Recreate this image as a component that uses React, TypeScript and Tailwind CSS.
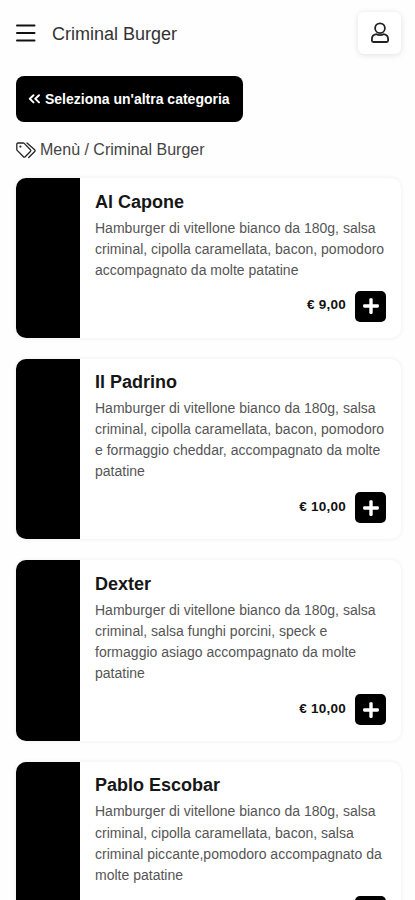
import { FaPlus } from "react-icons/fa"

interface ProductCardProps {
  name: string
  description: string[]
  price: string
}

const products: ProductCardProps[] = [
  {
    name: "Al Capone",
    description: [
      "Hamburger di vitellone bianco da 180g, salsa",
      "criminal, cipolla caramellata, bacon, pomodoro",
      "accompagnato da molte patatine",
    ],
    price: "9,00",
  },
  {
    name: "Il Padrino",
    description: [
      "Hamburger di vitellone bianco da 180g, salsa",
      "criminal, cipolla caramellata, bacon, pomodoro",
      "e formaggio cheddar, accompagnato da molte",
      "patatine",
    ],
    price: "10,00",
  },
  {
    name: "Dexter",
    description: [
      "Hamburger di vitellone bianco da 180g, salsa",
      "criminal, salsa funghi porcini, speck e",
      "formaggio asiago accompagnato da molte",
      "patatine",
    ],
    price: "10,00",
  },
  {
    name: "Pablo Escobar",
    description: [
      "Hamburger di vitellone bianco da 180g, salsa",
      "criminal, cipolla caramellata, bacon, salsa",
      "criminal piccante,pomodoro accompagnato da",
      "molte patatine",
    ],
    price: "10,00",
  },
]

const MenuIcon = () => (
  <svg
    viewBox="0 0 20 18"
    className="h-[18px] w-5 text-[#111]"
    fill="none"
    stroke="currentColor"
    strokeWidth="2"
    strokeLinecap="round"
  >
    <path d="M1 1.5h17.5M1 9h17.5M1 16.5h17.5" />
  </svg>
)

const UserIcon = () => (
  <svg
    viewBox="0 0 20 22"
    className="h-[22px] w-5 text-[#222]"
    fill="none"
    stroke="currentColor"
    strokeWidth="1.8"
    strokeLinejoin="round"
  >
    <circle cx="10" cy="6.2" r="4.9" />
    <path d="M6.4 12.2C3.500 12.600 1.900 14.600 1.900 17.200v1.300c0 .9.7 1.500 1.500 1.500h13.200c.8 0 1.500-.6 1.500-1.500v-1.300c0-2.600-1.600-4.600-4.500-5-1.200.7-2.300.9-3.600.9s-2.400-.2-3.600-.9z" />
  </svg>
)

const BackIcon = () => (
  <svg
    viewBox="0 0 13 10"
    className="mr-1 h-2.5 w-[13px]"
    fill="none"
    stroke="currentColor"
    strokeWidth="1.9"
    strokeLinecap="round"
    strokeLinejoin="round"
  >
    <path d="M5.500 1.200L1.800 4.800l3.700 3.600M11 1.200L7.300 4.800 11 8.400" />
  </svg>
)

const TagsIcon = () => (
  <svg
    viewBox="0 0 20 17"
    className="h-[17px] w-5 text-[#222]"
    fill="none"
    stroke="currentColor"
    strokeWidth="1.3"
    strokeLinejoin="round"
    strokeLinecap="round"
  >
    <path d="M.8 2.2v5.2c0 .4.1.7.4 1l6.2 6.3c.5.5 1.3.5 1.8 0l5.2-5.2c.5-.5.5-1.3 0-1.8L8.200 1.400c-.3-.3-.6-.4-1-.4H2C1.300 1 .8 1.500.8 2.200z" />
    <path d="M11 1l7.700 6.700c.6.5.6 1.300 0 1.800l-6 6" />
    <circle cx="4.4" cy="4.600" r="1.100" fill="currentColor" stroke="none" />
  </svg>
)

const ProductCard: React.FunctionComponent<ProductCardProps> = ({
  name,
  description,
  price,
}) => {
  return (
    <div className="flex overflow-hidden rounded-[10px] bg-white shadow-[0_0_5px_rgba(0,0,0,0.07)]">
      <div className="w-16 shrink-0 bg-black" />
      <div className="min-w-0 flex-1 pt-[11.5px] pr-[15px] pb-4 pl-[15px]">
        <h2 className="text-[18px] leading-6 font-bold whitespace-nowrap text-[#161616]">
          {name}
        </h2>
        <div className="mt-1 text-[14px] leading-[21.1px] tracking-[0.01px] whitespace-nowrap text-[#555]">
          {description.map((line) => (
            <p key={line}>{line}</p>
          ))}
        </div>
        <div className="mt-2.5 flex items-center justify-end gap-[9px]">
          <span className="pb-0.5 text-[13.5px] font-bold tracking-[0.25px] text-[#111]">
            € {price}
          </span>
          <button className="flex h-[31px] w-[31px] items-center justify-center rounded-[5px] bg-black text-white">
            <FaPlus className="h-[18px] w-[18px]" />
          </button>
        </div>
      </div>
    </div>
  )
}

const App: React.FunctionComponent = () => {
  return (
    <div className="h-[900px] w-[415px] overflow-hidden bg-[#fefefe] pr-3.5 pl-4 font-['Liberation_Sans',Arial,sans-serif]">
      <header className="flex items-center pt-3">
        <MenuIcon />
        <h1 className="ml-4 flex-1 pt-0.5 text-[18px] leading-6 text-[#333]">
          Criminal Burger
        </h1>
        <button className="flex h-[42px] w-[43px] items-center justify-center rounded-md bg-white shadow-[0_1px_6px_rgba(0,0,0,0.12)]">
          <UserIcon />
        </button>
      </header>
      <button className="mt-[22px] flex h-[46px] w-[227px] items-center rounded-lg bg-black pl-3 text-[14px] font-bold whitespace-nowrap text-white">
        <BackIcon />
        Seleziona un'altra categoria
      </button>
      <div className="mt-4 flex h-6 items-center text-[16px] text-[#444]">
        <span className="mr-1">
          <TagsIcon />
        </span>
        Menù / Criminal Burger
      </div>
      <main className="mt-4 flex flex-col gap-[20.8px]">
        {products.map((product) => (
          <ProductCard key={product.name} {...product} />
        ))}
      </main>
    </div>
  )
}

export default App
